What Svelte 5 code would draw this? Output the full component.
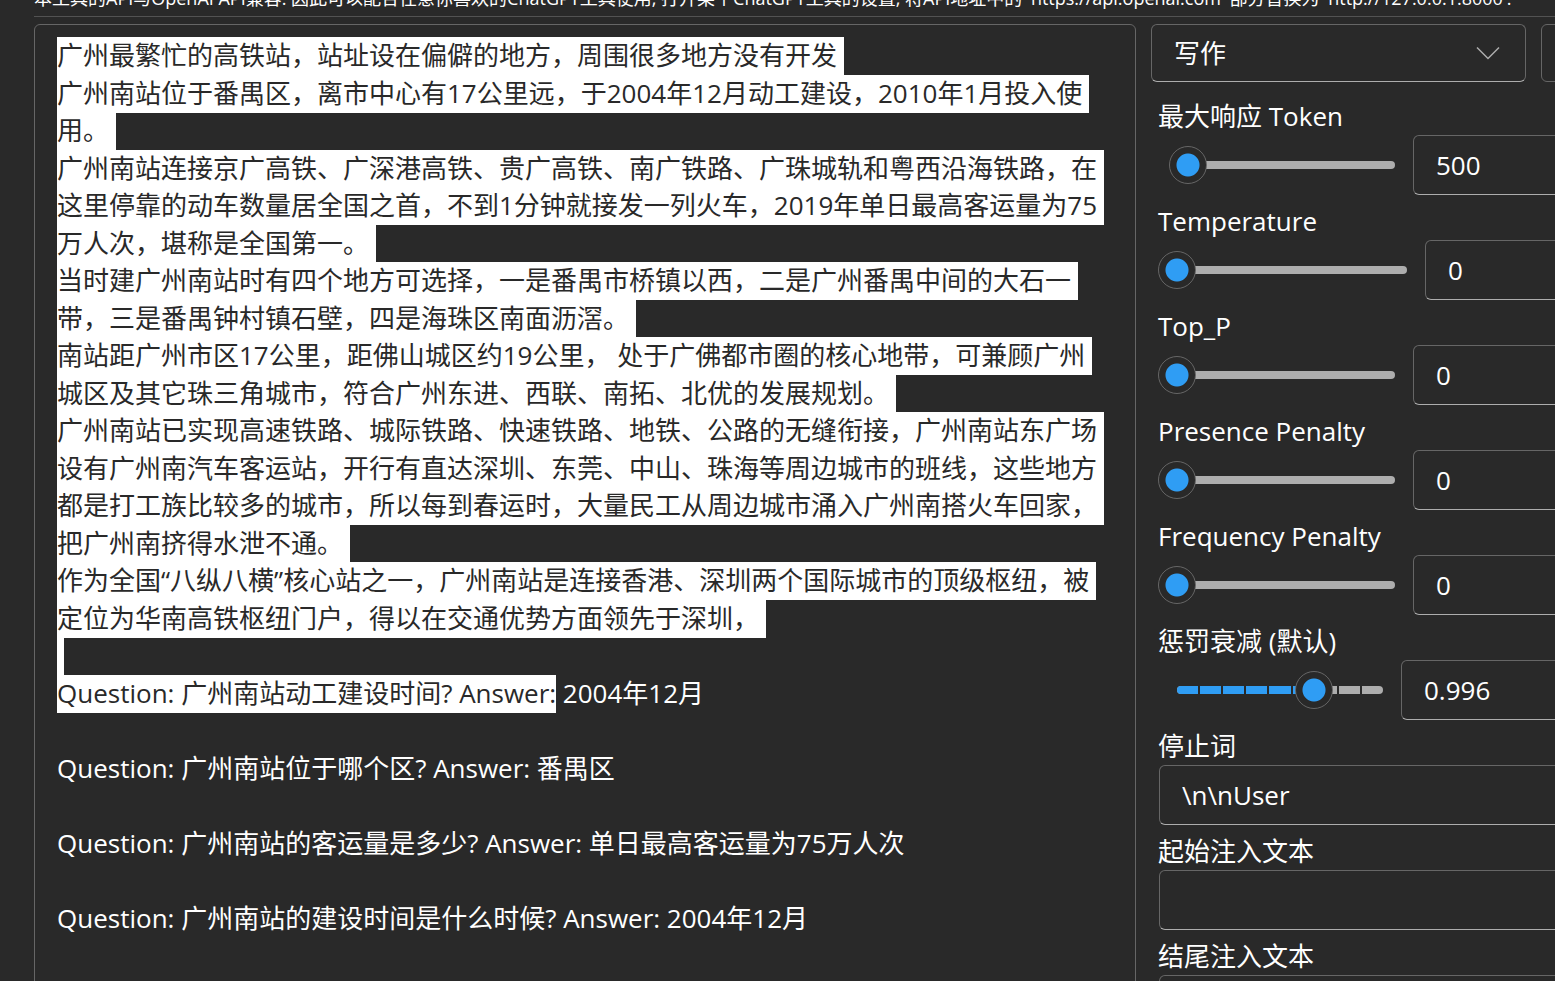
<script>
  import { onMount } from 'svelte';

  const passage = `广州最繁忙的高铁站，站址设在偏僻的地方，周围很多地方没有开发
广州南站位于番禺区，离市中心有17公里远，于2004年12月动工建设，2010年1月投入使用。
广州南站连接京广高铁、广深港高铁、贵广高铁、南广铁路、广珠城轨和粤西沿海铁路，在这里停靠的动车数量居全国之首，不到1分钟就接发一列火车，2019年单日最高客运量为75万人次，堪称是全国第一。
当时建广州南站时有四个地方可选择，一是番禺市桥镇以西，二是广州番禺中间的大石一带，三是番禺钟村镇石壁，四是海珠区南面沥滘。
南站距广州市区17公里，距佛山城区约19公里， 处于广佛都市圈的核心地带，可兼顾广州城区及其它珠三角城市，符合广州东进、西联、南拓、北优的发展规划。
广州南站已实现高速铁路、城际铁路、快速铁路、地铁、公路的无缝衔接，广州南站东广场设有广州南汽车客运站，开行有直达深圳、东莞、中山、珠海等周边城市的班线，这些地方都是打工族比较多的城市，所以每到春运时，大量民工从周边城市涌入广州南搭火车回家，把广州南挤得水泄不通。
作为全国“八纵八横”核心站之一，广州南站是连接香港、深圳两个国际城市的顶级枢纽，被定位为华南高铁枢纽门户，得以在交通优势方面领先于深圳，

Question: 广州南站动工建设时间? Answer:`;

  const answers = ` 2004年12月

Question: 广州南站位于哪个区? Answer: 番禺区

Question: 广州南站的客运量是多少? Answer: 单日最高客运量为75万人次

Question: 广州南站的建设时间是什么时候? Answer: 2004年12月
`;

  let prompt = $state(passage + answers);
  let editor;

  let sliders = $state([
    { id: 'max-token', label: '最大响应 Token', value: 500, min: 100, max: 8000, step: 100, size: 'mid' },
    { id: 'temperature', label: 'Temperature', value: 0, min: 0, max: 2, step: 0.1, size: 'narrow' },
    { id: 'top-p', label: 'Top_P', value: 0, min: 0, max: 1, step: 0.05, size: 'mid' },
    { id: 'presence', label: 'Presence Penalty', value: 0, min: 0, max: 2, step: 0.1, size: 'mid' },
    { id: 'frequency', label: 'Frequency Penalty', value: 0, min: 0, max: 2, step: 0.1, size: 'mid' },
    { id: 'decay', label: '惩罚衰减 (默认)', value: 0.996, min: 0.99, max: 0.999, step: 0.001, size: 'wide', ticks: true }
  ]);

  let texts = $state([
    { id: 'stop', label: '停止词', value: '\\n\\nUser' },
    { id: 'inject-start', label: '起始注入文本', value: '' },
    { id: 'inject-end', label: '结尾注入文本', value: '' }
  ]);

  const fill = (s) => ((s.value - s.min) / (s.max - s.min)) * 100;

  onMount(() => {
    editor.focus({ preventScroll: true });
    editor.setSelectionRange(0, passage.length);
    editor.scrollTop = 0;
  });
</script>

<div class="app">
  <header>
    本工具的API与OpenAI API兼容. 因此可以配合任意你喜欢的ChatGPT工具使用, 打开某个ChatGPT工具的设置, 将API地址中的 'https://api.openai.com' 部分替换为 'http://127.0.0.1:8000'.
  </header>
  <main>
    <textarea bind:this={editor} bind:value={prompt} aria-label="Prompt" spellcheck="false"></textarea>
    <aside>
      <div class="presets">
        <div class="select">
          <select aria-label="预设">
            <option>写作</option>
          </select>
          <svg viewBox="0 0 24 14" aria-hidden="true"><path d="M1 1.5 12 12.5 23 1.5" /></svg>
        </div>
        <button aria-label="重置"></button>
      </div>
      {#each sliders as s (s.id)}
        <label for={s.id}>{s.label}</label>
        <div class="row">
          <div class="slider">
            <span class="rail" class:ticks={s.ticks}><span class="fill" style="width: {fill(s)}%"></span></span>
            <input type="range" aria-label={s.label} min={s.min} max={s.max} step={s.step} bind:value={s.value} />
          </div>
          <input id={s.id} class="field {s.size}" type="text" bind:value={s.value} />
        </div>
      {/each}
      {#each texts as t (t.id)}
        <label for={t.id}>{t.label}</label>
        <div class="row text">
          <input id={t.id} class="field" type="text" bind:value={t.value} />
        </div>
      {/each}
    </aside>
  </main>
</div>

<style>
  :global(body) {
    margin: 0;
    background: #292929;
  }
  .app {
    box-sizing: border-box;
    height: 100vh;
    overflow: hidden;
    padding-left: 34px;
    background: #292929;
    color: #fff;
    font-family: 'Open Sans', 'Noto Sans CJK SC', sans-serif;
    font-size: 26px;
  }
  header {
    height: 16px;
    border-bottom: 1px solid #525252;
    display: flex;
    align-items: flex-end;
    white-space: nowrap;
    overflow: hidden;
    font-size: 18px;
    line-height: 36px;
  }
  main {
    display: grid;
    grid-template-columns: minmax(0, 1fr) 404px;
    gap: 15px;
    margin-top: 7px;
  }
  textarea,
  select,
  input,
  button {
    box-sizing: border-box;
    min-width: 0;
    margin: 0;
    font: inherit;
    color: inherit;
    background: transparent;
    outline: none;
  }
  textarea {
    width: 100%;
    padding: 12px 30px 12px 22px;
    border: 1px solid #666;
    border-radius: 6px;
    resize: none;
    overflow: hidden;
    line-height: calc(75px / 2);
    caret-color: transparent;
  }
  textarea::selection {
    background: #fff;
    color: #292929;
  }
  aside {
    width: 480px;
  }
  .presets {
    display: flex;
    gap: 15px;
    height: 58px;
    margin-bottom: 8px;
  }
  .select {
    flex: 1;
    display: grid;
    align-items: center;
  }
  .select select,
  .select svg {
    grid-area: 1 / 1;
  }
  select {
    height: 58px;
    width: 100%;
    padding: 0 22px;
    appearance: none;
    border: 1px solid #666;
    border-bottom-color: #adadad;
    border-radius: 6px;
  }
  svg {
    justify-self: end;
    width: 24px;
    height: 14px;
    margin-right: 26px;
    fill: none;
    stroke: #adadad;
    stroke-width: 1.5;
    pointer-events: none;
  }
  button {
    width: 90px;
    border: 1px solid #666;
    border-radius: 6px;
  }
  label {
    display: block;
    padding: 8px 0 0 7px;
    line-height: 37px;
  }
  .row {
    display: flex;
    padding-left: 7px;
  }
  .text {
    padding-left: 8px;
  }
  .slider {
    flex: 1;
    display: grid;
    align-items: center;
  }
  .rail,
  .slider input {
    grid-area: 1 / 1;
  }
  .rail {
    position: relative;
    height: 8px;
    margin: 0 18px 0 19px;
    border-radius: 4px;
    background: #adadad;
    overflow: hidden;
  }
  .fill {
    display: block;
    height: 100%;
    background: #2f9df4;
  }
  .ticks::after {
    content: '';
    position: absolute;
    inset: 0;
    background: repeating-linear-gradient(
      90deg,
      transparent 0 calc((100% + 2px) / 9 - 2px),
      #292929 calc((100% + 2px) / 9 - 2px) calc((100% + 2px) / 9)
    );
  }
  input[type='range'] {
    position: relative;
    width: 100%;
    height: 38px;
    appearance: none;
  }
  input[type='range']::-webkit-slider-thumb {
    box-sizing: border-box;
    appearance: none;
    width: 38px;
    height: 38px;
    border: 1px solid #666;
    border-radius: 50%;
    background: radial-gradient(circle, #2f9df4 11px, #292929 12px);
  }
  .field {
    flex: 1;
    height: 60px;
    padding: 0 22px;
    border: 1px solid #666;
    border-bottom-color: #adadad;
    border-radius: 6px;
  }
  .narrow {
    flex: 0 0 206px;
  }
  .mid {
    flex: 0 0 218px;
  }
  .wide {
    flex: 0 0 230px;
  }
</style>
